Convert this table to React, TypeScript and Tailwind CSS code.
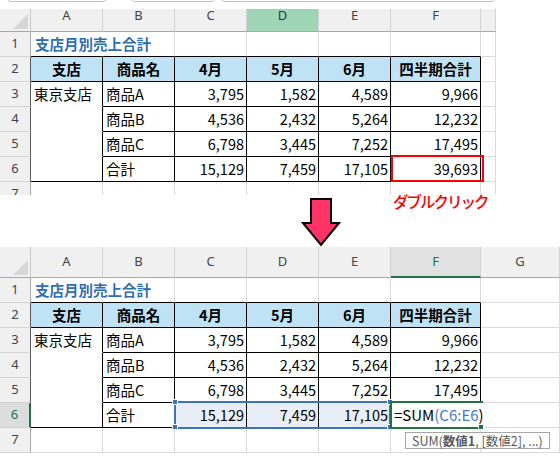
import React from "react";

const LETTERS = ["A", "B", "C", "D", "E", "F", "G"];
const W_TOP = [72, 72, 72, 72, 72, 90, 15];
const W_BOT = [72, 72, 72, 72, 72, 90, 79];

const DATA: string[][] = [
  ["支店月別売上合計", "", "", "", "", "", ""],
  ["支店", "商品名", "4月", "5月", "6月", "四半期合計", ""],
  ["東京支店", "商品A", "3,795", "1,582", "4,589", "9,966", ""],
  ["", "商品B", "4,536", "2,432", "5,264", "12,232", ""],
  ["", "商品C", "6,798", "3,445", "7,252", "17,495", ""],
  ["", "合計", "15,129", "7,459", "17,105", "39,693", ""],
  ["", "", "", "", "", "", ""],
];

const jp = "font-['Noto_Sans_CJK_JP',sans-serif]";
const ui = "font-['Noto_Sans','Noto_Sans_CJK_JP',sans-serif]";

function cellClass(r: number, c: number, edit: boolean) {
  const inTable = r >= 2 && r <= 6 && c <= 5;
  let right = inTable ? "border-r-black" : "border-r-[#dadada]";
  if (r === 1 && c === 0) right = "border-r-white";
  if (edit && r === 6 && c === 5) right = "border-r-white";
  let bottom = "border-b-[#dadada]";
  if (r >= 1 && r <= 6 && c <= 5) bottom = "border-b-black";
  if (r >= 3 && r <= 5 && c === 0) bottom = "border-b-white";
  let bg = "";
  if (r === 2 && c <= 5) bg = "bg-[#bfe2f4]";
  if (edit && r === 6 && c >= 2 && c <= 4) bg = "bg-[#e8eef8]";
  return `${right} ${bottom} ${bg}`;
}

function CellText({ r, c, text, edit }: { r: number; c: number; text: string; edit: boolean }) {
  if (edit && r === 6 && c === 5) {
    return (
      <span className="pl-[3px] whitespace-nowrap text-[15px] text-black">
        =SUM<span className="text-[#4a78c8]">(C6:E6</span>)
      </span>
    );
  }
  if (!text) return null;
  if (r === 1) {
    return <span className="pl-[4px] whitespace-nowrap font-bold text-[#2f6db3]">{text}</span>;
  }
  if (r === 2) {
    return <span className="w-full text-center font-bold text-black">{text}</span>;
  }
  if (c >= 2) {
    return <span className="w-full text-right pr-[2px] text-black">{text}</span>;
  }
  return <span className="pl-[3px] whitespace-nowrap text-black">{text}</span>;
}

function Sheet({ edit }: { edit: boolean }) {
  const widths = edit ? W_BOT : W_TOP;
  const headH = edit ? "h-[31px]" : "h-[32px]";
  return (
    <div className="flex flex-col">
      {/* column header */}
      <div className={`flex ${headH}`}>
        <div className="relative w-[31px] shrink-0 bg-[#f0f0f0] border-r border-b border-r-[#c8c8c8] border-b-[#a8a8a8]">
          <svg className="absolute right-[2px] bottom-[2px]" width="15" height="15" viewBox="0 0 15 15">
            <polygon points="15,0 15,15 0,15" fill="#d6d6d6" />
          </svg>
        </div>
        {widths.map((w, i) => {
          let cls = "bg-[#f0f0f0] border-b-[#a8a8a8] text-[#444]";
          if (!edit && i === 3) cls = "bg-[#9fd5b7] border-b-[#a8a8a8] text-[#333]";
          if (edit && i === 5) cls = "bg-[#e1e1e1] border-b-[#217346] border-b-2 text-[#217346]";
          return (
            <div
              key={i}
              style={{ width: w }}
              className={`shrink-0 flex items-center justify-center border-r border-b border-r-[#d2d2d2] ${cls} ${ui} text-[13px]`}
            >
              {w > 20 ? LETTERS[i] : ""}
            </div>
          );
        })}
      </div>
      {/* rows */}
      {DATA.map((row, r) => (
        <div key={r} className="flex h-[25px]">
          <div
            className={`w-[31px] shrink-0 flex items-center justify-center border-b ${ui} text-[13px] ${
              edit && r === 5
                ? "bg-[#dcdcdc] border-r-2 border-r-[#217346] border-b-[#cfcfcf] text-[#217346]"
                : `bg-[#f0f0f0] border-r border-b-[#d4d4d4] text-[#444] ${
                    r >= 1 && r <= 5 ? "border-r-[#5a5a5a]" : "border-r-[#a8a8a8]"
                  }`
            }`}
          >
            {r + 1}
          </div>
          {widths.map((w, c) => (
            <div
              key={c}
              style={{ width: w }}
              className={`shrink-0 flex items-center border-r border-b ${cellClass(r + 1, c, edit)} ${jp} text-[14.5px] leading-[20px]`}
            >
              <CellText r={r + 1} c={c} text={row[c]} edit={edit} />
            </div>
          ))}
        </div>
      ))}
    </div>
  );
}

function Handle({ cls, color }: { cls: string; color: string }) {
  return <div className={`absolute w-[6px] h-[6px] border border-white ${color} ${cls}`} />;
}

export default function App() {
  return (
    <div className="w-[560px] h-[456px] bg-white overflow-hidden flex flex-col">
      {/* top sheet */}
      <div className="relative h-[195px] w-[496px] overflow-hidden shrink-0">
        <Sheet edit={false} />
        {/* toolbar strip over the header */}
        <div className="absolute left-0 top-0 w-[560px] h-[9px] bg-white overflow-hidden">
          <div className="absolute left-[7px] top-[-8px] w-[100px] h-[10px] border border-[#c4c4c4] rounded-[4px]" />
          <div className="absolute left-[131px] top-[-8px] w-[84px] h-[10px] border border-[#c4c4c4] rounded-[4px]" />
          <div className="absolute left-[221px] top-[-8px] w-[274px] h-[10px] border border-[#c4c4c4] rounded-[4px]" />
        </div>
        {/* double-click target */}
        <div className="absolute left-[391px] top-[155px] w-[93px] h-[27px] border-2 border-[#ff0000]" />
      </div>

      {/* annotation */}
      <div className="flex h-[52px] shrink-0">
        <svg className="ml-[301px] mt-[2px]" width="40" height="50" viewBox="0 0 40 50">
          <polygon
            points="10,2 30,2 30,26 38,26 20,48 2,26 10,26"
            fill="#ff3366"
            stroke="#000"
            strokeWidth="2"
          />
        </svg>
        <span className={`ml-[52px] -mt-[5px] h-[22px] text-[15.5px] leading-[22px] tracking-[-2px] font-medium text-[#ff0000] ${jp}`}>
          ダブルクリック
        </span>
      </div>

      {/* bottom sheet */}
      <div className="relative shrink-0">
        <Sheet edit={true} />
        {/* referenced range C6:E6 */}
        <div className="absolute left-[174px] top-[154px] w-[217px] h-[28px] border-2 border-[#3f6fc3]" />
        <Handle cls="left-[172px] top-[152px]" color="bg-[#3f6fc3]" />
        <Handle cls="left-[387px] top-[152px]" color="bg-[#3f6fc3]" />
        <Handle cls="left-[172px] top-[177px]" color="bg-[#3f6fc3]" />
        <Handle cls="left-[387px] top-[177px]" color="bg-[#3f6fc3]" />
        {/* active cell F6 */}
        <div className="absolute left-[390px] top-[154px] w-[93px] h-[28px] border-t-2 border-b-2 border-l-2 border-[#217346]" />
        <Handle cls="left-[478px] top-[177px]" color="bg-[#217346]" />
        {/* function tooltip */}
        <div
          className={`absolute left-[405px] top-[185px] w-[145px] h-[17px] bg-white border border-[#a6a6a6] flex items-center pl-[6px] text-[12.5px] leading-[15px] text-[#595959] whitespace-nowrap ${jp}`}
        >
          SUM(<span className="font-bold">数値1</span>, [数値2], ...)
        </div>
      </div>
    </div>
  );
}
